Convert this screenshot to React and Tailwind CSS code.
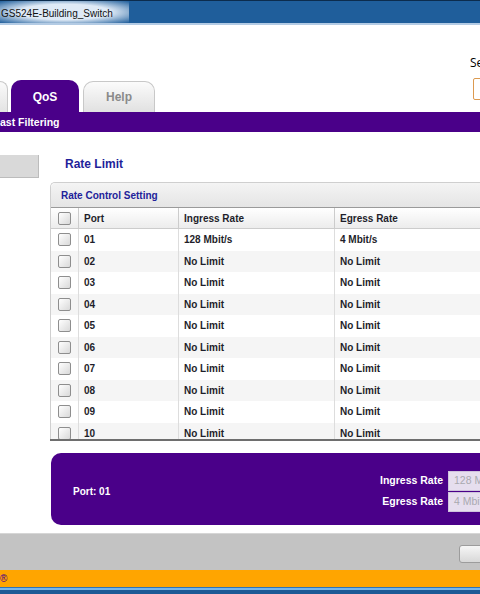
const rows = [
  ['01', '128 Mbit/s', '4 Mbit/s'],
  ['02', 'No Limit', 'No Limit'],
  ['03', 'No Limit', 'No Limit'],
  ['04', 'No Limit', 'No Limit'],
  ['05', 'No Limit', 'No Limit'],
  ['06', 'No Limit', 'No Limit'],
  ['07', 'No Limit', 'No Limit'],
  ['08', 'No Limit', 'No Limit'],
  ['09', 'No Limit', 'No Limit'],
  ['10', 'No Limit', 'No Limit'],
];

function Check() {
  return <div className="w-[13px] h-[13px] rounded-[2px] border border-[#8e8e8e] bg-gradient-to-br from-white to-[#d9d9d9]" />;
}

export default function App() {
  return (
    <div className="w-[480px] h-[594px] overflow-hidden bg-white flex flex-col font-['Liberation_Sans',Arial,sans-serif]">
      {/* window title */}
      <div className="h-[25px] shrink-0 bg-[#1f5e9b] border-t border-[#0c2c4d] border-b-2 border-b-[#b3cbe4] flex items-center">
        <span className="h-full pl-[1px] pr-[16px] pt-[2px] flex items-center text-[10px] text-[#111] bg-[radial-gradient(ellipse_at_center,#dfeaf6_50%,#1f5e9b_100%)]">
          GS524E-Building_Switch
        </span>
      </div>

      {/* header + tabs */}
      <div className="h-[87px] shrink-0 flex items-end">
        <div className="w-[8px] h-[31px] rounded-tr-[9px] border-t border-r border-[#c8c8c8] bg-gradient-to-b from-[#fafafa] to-[#e3e3e3]" />
        <div className="ml-[3px] w-[68px] h-[32px] pt-[2px] rounded-t-[10px] bg-[#4a0089] flex items-center justify-center text-white font-bold text-[12px]">QoS</div>
        <div className="ml-[4px] w-[72px] h-[31px] rounded-t-[10px] border border-b-0 border-[#c8c8c8] bg-gradient-to-b from-[#fbfbfb] to-[#e1e1e1] flex items-center justify-center text-[#8a8a8a] font-bold text-[12px]">Help</div>
        <div className="ml-auto w-[10px] self-stretch pt-[31px]">
          <div className="text-[12px] leading-[14px] text-black whitespace-nowrap font-['Open_Sans',sans-serif]">Se</div>
          <div className="mt-[8px] ml-[3px] w-[60px] h-[22px] border border-[#dc9a50] rounded-[2px] bg-white" />
        </div>
      </div>

      {/* sub menu bar */}
      <div className="h-[20px] shrink-0 pt-[2px] bg-[#4a0089] flex items-center text-white font-bold text-[10.5px] whitespace-nowrap">ast Filtering</div>

      {/* main */}
      <div className="flex shrink-0">
        <div className="w-[50px] shrink-0 pt-[23px]">
          <div className="w-[39px] h-[23px] bg-[#d9d9d9] border-r border-b border-[#bcbcbc]" />
        </div>
        <div className="w-[480px] shrink-0">
          <div className="pt-[25px] pl-[15px] text-[12px] leading-[14px] font-bold text-[#1f1f9a]">Rate Limit</div>

          <div className="mt-[11px] border-l border-t border-[#cfcfcf] rounded-tl-[5px]">
            <div className="h-[24px] pl-[10px] flex items-center bg-gradient-to-b from-[#f4f4f4] to-[#e5e5e5] rounded-tl-[5px] text-[10px] font-bold text-[#22229a]">
              Rate Control Setting
            </div>
            <div className="border-t border-[#9a9a9a]">
              <div className="grid grid-cols-[27px_100px_156px_1fr] h-[21px] bg-gradient-to-b from-white to-[#ececec] border-b border-[#cccccc] text-[10px] font-bold text-[#1e1e2a]">
                <div className="flex items-center justify-center"><Check /></div>
                <div className="border-l border-[#cccccc] pl-[5px] flex items-center">Port</div>
                <div className="border-l border-[#cccccc] pl-[5px] flex items-center">Ingress Rate</div>
                <div className="border-l border-[#cccccc] pl-[5px] flex items-center">Egress Rate</div>
              </div>
              <div className="h-[210px] overflow-hidden">
                {rows.map((r, i) => (
                  <div key={r[0]} className={`grid grid-cols-[27px_100px_156px_1fr] h-[21.5px] text-[10px] font-bold text-[#1e1e2a] ${i % 2 === 1 ? 'bg-[#f5f5f5]' : 'bg-white'}`}>
                    <div className="flex items-center justify-center"><Check /></div>
                    <div className="border-l border-[#dddddd] pl-[5px] flex items-center">{r[0]}</div>
                    <div className="border-l border-[#dddddd] pl-[5px] flex items-center">{r[1]}</div>
                    <div className="border-l border-[#dddddd] pl-[5px] flex items-center">{r[2]}</div>
                  </div>
                ))}
              </div>
              <div className="h-[2px] bg-[#6e6e6e] -ml-px" />
            </div>
          </div>

          {/* selected port box */}
          <div className="mt-[12px] ml-[1px] w-[500px] h-[72px] rounded-[10px] bg-[#4a0089] flex items-center">
            <div className="w-[319px] pl-[22px] pt-[5px] text-white font-bold text-[10px]">Port: 01</div>
            <div className="flex flex-col gap-[1px] pt-[4px]">
              <div className="flex items-center h-[20px]">
                <div className="w-[73px] text-right text-white font-bold text-[10.5px]">Ingress Rate</div>
                <div className="ml-[5px] w-[80px] h-[20px] border border-[#cfc3dd] bg-[#e6deee] pl-[5px] flex items-center text-[10.5px] text-[#a9a9b0] whitespace-nowrap">128 Mbit/s</div>
              </div>
              <div className="flex items-center h-[20px]">
                <div className="w-[73px] text-right text-white font-bold text-[10.5px]">Egress Rate</div>
                <div className="ml-[5px] w-[80px] h-[20px] border border-[#cfc3dd] bg-[#e6deee] pl-[5px] flex items-center text-[10.5px] text-[#a9a9b0] whitespace-nowrap">4 Mbit/s</div>
              </div>
            </div>
          </div>
        </div>
      </div>

      {/* footer */}
      <div className="mt-[8px] h-[37px] shrink-0 bg-[#c3c3c3] border-t border-[#d6d6d6] pl-[459px] pt-[11px]">
        <div className="w-[60px] h-[18px] rounded-[3px] border border-[#9c9c9c] bg-gradient-to-b from-[#f6f6f6] to-[#d8d8d8]" />
      </div>
      <div className="h-[17px] shrink-0 bg-[#ffa500] flex items-center text-[10px] text-[#4a0089] leading-none">®</div>
      <div className="h-[7px] shrink-0 bg-[#1d5a96] border-t border-[#2f74b6] flex flex-col">
        <div className="h-[2px] bg-[#79b6ea]" />
      </div>
    </div>
  );
}
